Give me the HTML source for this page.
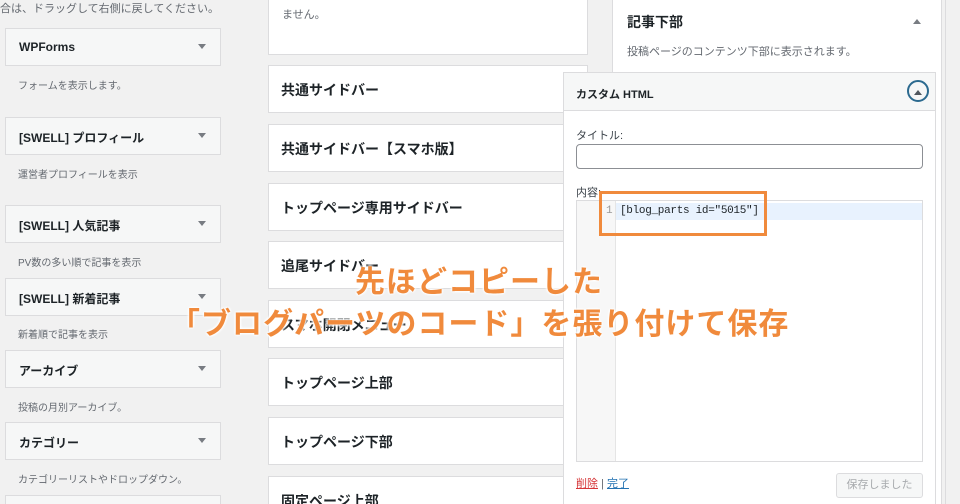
<!DOCTYPE html><html><head><meta charset="utf-8"><style>
*{box-sizing:border-box;margin:0;padding:0}
html,body{width:960px;height:504px;overflow:hidden}
body{background:#f1f1f1;font-family:"Liberation Sans","Noto Sans CJK JP",sans-serif;color:#1d2327;position:relative}
.a{position:absolute}
.lw{position:absolute;left:5px;width:216px;height:38px;background:#f6f7f7;border:1px solid #dcdcde;font-size:12px;font-weight:bold;padding:11px 13px}
.lw:after{content:"";position:absolute;right:14px;top:15px;border:4px solid transparent;border-top:5px solid #787c82}
.ld{position:absolute;left:18px;font-size:10px;color:#646970}
.mb{position:absolute;left:268px;width:320px;height:48px;background:#fff;border:1px solid #dcdcde;font-size:14px;font-weight:bold;padding:14px 12px;overflow:hidden}
.ov{position:absolute;font-size:30px;font-weight:bold;color:#f08a3c;white-space:nowrap;text-shadow:0 0 3px #fff,0 0 3px #fff,0 0 3px #fff,0 0 2px #fff;letter-spacing:1px;line-height:1}
</style></head><body>
<div class="a" style="left:0;top:0;font-size:11px;color:#646970">合は、ドラッグして右側に戻してください。</div>
<div class="lw" style="top:28px">WPForms</div><div class="ld" style="top:77px">フォームを表示します。</div>
<div class="lw" style="top:117px">[SWELL] プロフィール</div><div class="ld" style="top:166px">運営者プロフィールを表示</div>
<div class="lw" style="top:205px">[SWELL] 人気記事</div><div class="ld" style="top:254px">PV数の多い順で記事を表示</div>
<div class="lw" style="top:278px">[SWELL] 新着記事</div><div class="ld" style="top:326px">新着順で記事を表示</div>
<div class="lw" style="top:350px">アーカイブ</div><div class="ld" style="top:399px">投稿の月別アーカイブ。</div>
<div class="lw" style="top:422px">カテゴリー</div><div class="ld" style="top:471px">カテゴリーリストやドロップダウン。</div>
<div class="a" style="left:5px;top:495px;width:216px;height:9px;background:#f6f7f7;border:1px solid #dcdcde;border-bottom:0"></div>
<div class="mb" style="top:0;height:55px;font-size:11px;font-weight:normal;color:#646970;padding:6px 13px;border-top:0">ません。</div>
<div class="mb" style="top:65px">共通サイドバー</div>
<div class="mb" style="top:124px">共通サイドバー【スマホ版】</div>
<div class="mb" style="top:183px">トップページ専用サイドバー</div>
<div class="mb" style="top:241px">追尾サイドバー</div>
<div class="mb" style="top:300px">スマホ開閉メニュー</div>
<div class="mb" style="top:358px">トップページ上部</div>
<div class="mb" style="top:417px">トップページ下部</div>
<div class="mb" style="top:476px;height:28px;border-bottom:0">固定ページ上部</div>
<div class="a" style="left:612px;top:0;width:330px;height:504px;background:#fff;border-left:1px solid #dcdcde;border-right:1px solid #dcdcde"></div>
<div class="a" style="left:627px;top:12px;font-size:14px;font-weight:bold">記事下部</div>
<div class="a" style="left:913px;top:15px;border:4px solid transparent;border-bottom:5px solid #787c82"></div>
<div class="a" style="left:627px;top:43px;font-size:11px;color:#646970">投稿ページのコンテンツ下部に表示されます。</div>
<div class="a" style="left:563px;top:72px;width:373px;height:432px;background:#fff;border:1px solid #dcdcde;border-bottom:0"></div>
<div class="a" style="left:564px;top:73px;width:371px;height:38px;background:#f6f7f7;border-bottom:1px solid #dcdcde;font-size:11px;font-weight:bold;padding:13px 12px">カスタム HTML</div>
<div class="a" style="left:907px;top:80px;width:22px;height:22px;border:2px solid #2c6a8f;border-radius:50%"></div>
<div class="a" style="left:914px;top:86px;border:4px solid transparent;border-bottom:5px solid #50575e"></div>
<div class="a" style="left:576px;top:127px;font-size:11px;color:#3c434a">タイトル:</div>
<div class="a" style="left:576px;top:144px;width:347px;height:25px;border:1px solid #8c8f94;border-radius:4px"></div>
<div class="a" style="left:576px;top:184px;font-size:11px;color:#3c434a">内容:</div>
<div class="a" style="left:576px;top:200px;width:347px;height:262px;border:1px solid #dcdcde"></div>
<div class="a" style="left:577px;top:201px;width:39px;height:260px;background:#f7f7f7;border-right:1px solid #e5e5e5"></div>
<div class="a" style="left:616px;top:203px;width:306px;height:17px;background:#e8f2fe"></div>
<div class="a" style="left:606px;top:205px;font-size:11px;color:#999;font-family:'Liberation Mono',monospace">1</div>
<div class="a" style="left:620px;top:205px;font-size:11px;font-family:'Liberation Mono',monospace;letter-spacing:-0.3px">[blog_parts id="5015"]</div>
<div class="a" style="left:599px;top:191px;width:168px;height:45px;border:3px solid #f08a3c"></div>
<div class="a" style="left:576px;top:475px;font-size:11px"><span style="color:#d63638;text-decoration:underline">削除</span> <span style="color:#646970">|</span> <span style="color:#2271b1;text-decoration:underline">完了</span></div>
<div class="a" style="left:836px;top:473px;width:87px;height:25px;background:#f6f7f7;border:1px solid #dcdcde;border-radius:3px;font-size:11px;color:#a7aaad;text-align:center;line-height:23px">保存しました</div>
<div class="a" style="left:945px;top:0;width:15px;height:504px;background:#f1f1f1;border-left:1px solid #dcdcde"></div>
<div class="ov" style="left:355px;top:268px">先ほどコピーした</div>
<div class="ov" style="left:170px;top:310px">「ブログパーツのコード」を張り付けて保存</div>
</body></html>
